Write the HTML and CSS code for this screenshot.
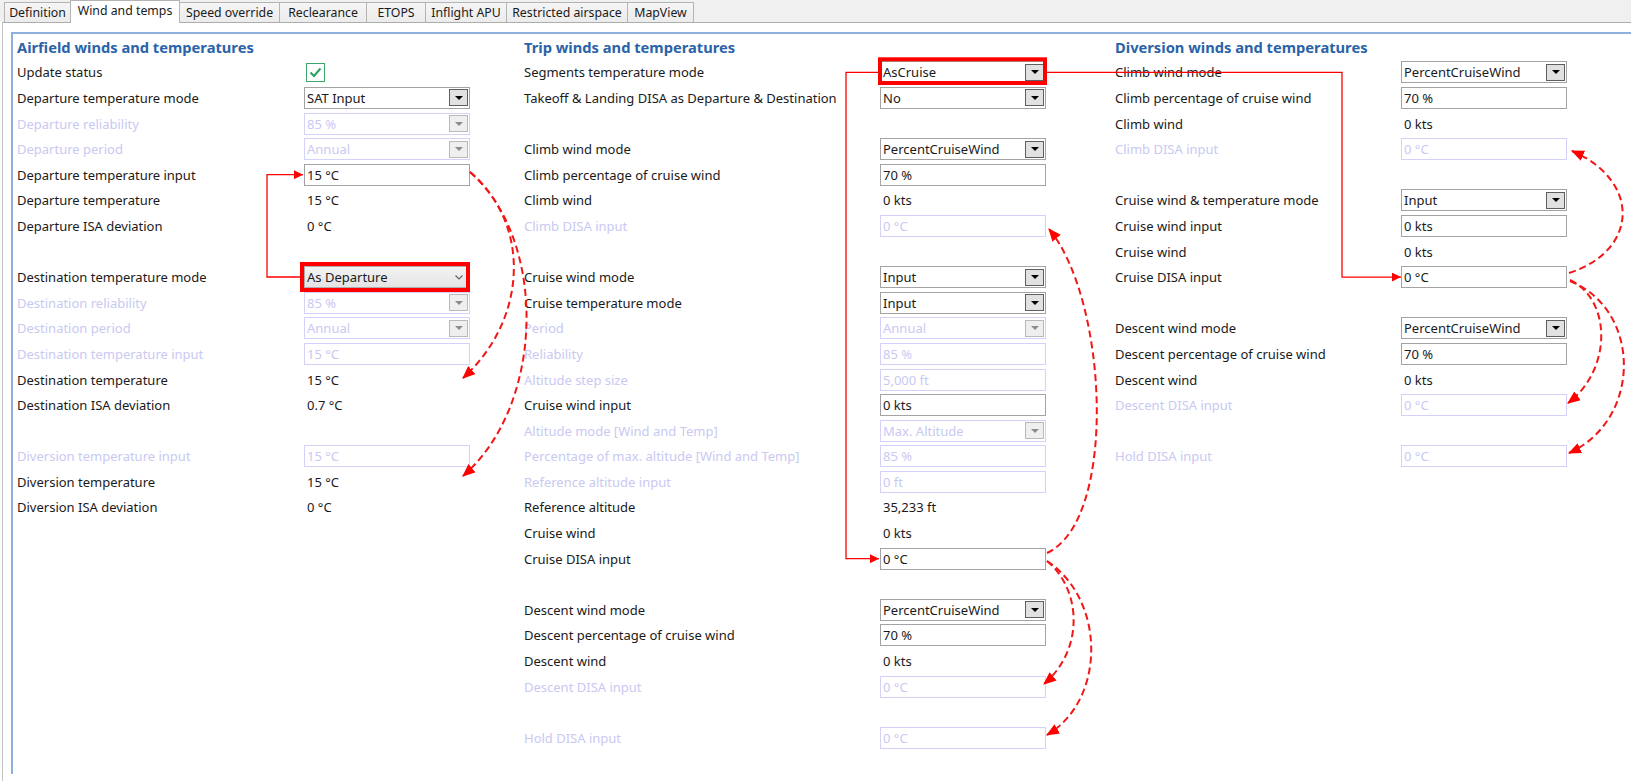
FILE: index.html
```html
<!DOCTYPE html>
<html>
<head>
    <meta charset="utf-8">
    <title> Wind and temps </title>
    <link rel="stylesheet" href="styles.css">
</head>
<body>
    <!-- Tab strip -->
    <div class="tabs">
        <div class="tab w-def">Definition</div>
        <div class="tab on w-wind">Wind and temps</div>
        <div class="tab w-speed">Speed override</div>
        <div class="tab w-recl">Reclearance</div>
        <div class="tab w-etops">ETOPS</div>
        <div class="tab w-apu">Inflight APU</div>
        <div class="tab w-restr">Restricted airspace</div>
        <div class="tab w-map">MapView</div>
    </div>

    <div class="page">
        <div class="panel">

            <!-- Airfield -->
            <section class="col airfield">
                <h2>Airfield winds and temperatures</h2>

                <span class="lbl">Update status</span>
                <span class="cb"><svg width="13" height="11" viewBox="0 0 13 11"><path d="M1.5,5.5 L5,9 L11.5,1.5" fill="none" stroke="#2b9f5f" stroke-width="2"/></svg></span>

                <span class="lbl">Departure temperature mode</span>
                <div class="dd"><span>SAT Input</span><i class="btn"></i></div>

                <span class="lbl off">Departure reliability</span>
                <div class="dd off"><span>85 %</span><i class="btn"></i></div>

                <span class="lbl off">Departure period</span>
                <div class="dd off"><span>Annual</span><i class="btn"></i></div>

                <span class="lbl">Departure temperature input</span>
                <div class="tb">15 °C</div>

                <span class="lbl">Departure temperature</span>
                <span class="val">15 °C</span>

                <span class="lbl">Departure ISA deviation</span>
                <span class="val">0 °C</span>

                <div class="gap"></div>

                <span class="lbl">Destination temperature mode</span>
                <div class="win"><span>As Departure</span><svg class="chev" width="8" height="5" viewBox="0 0 8 5"><path d="M0.5,0.5 L4,4 L7.5,0.5" fill="none" stroke="#606060" stroke-width="1.1"/></svg></div>

                <span class="lbl off">Destination reliability</span>
                <div class="dd off"><span>85 %</span><i class="btn"></i></div>

                <span class="lbl off">Destination period</span>
                <div class="dd off"><span>Annual</span><i class="btn"></i></div>

                <span class="lbl off">Destination temperature input</span>
                <div class="tb off">15 °C</div>

                <span class="lbl">Destination temperature</span>
                <span class="val">15 °C</span>

                <span class="lbl">Destination ISA deviation</span>
                <span class="val">0.7 °C</span>

                <div class="gap"></div>

                <span class="lbl off">Diversion temperature input</span>
                <div class="tb off">15 °C</div>

                <span class="lbl">Diversion temperature</span>
                <span class="val">15 °C</span>

                <span class="lbl">Diversion ISA deviation</span>
                <span class="val">0 °C</span>
            </section>

            <!-- Trip -->
            <section class="col trip">
                <h2>Trip winds and temperatures</h2>

                <span class="lbl">Segments temperature mode</span>
                <div class="dd"><span>AsCruise</span><i class="btn"></i></div>

                <span class="lbl">Takeoff &amp; Landing DISA as Departure &amp; Destination</span>
                <div class="dd"><span>No</span><i class="btn"></i></div>

                <div class="gap"></div>

                <span class="lbl">Climb wind mode</span>
                <div class="dd"><span>PercentCruiseWind</span><i class="btn"></i></div>

                <span class="lbl">Climb percentage of cruise wind</span>
                <div class="tb">70 %</div>

                <span class="lbl">Climb wind</span>
                <span class="val">0 kts</span>

                <span class="lbl off">Climb DISA input</span>
                <div class="tb off">0 °C</div>

                <div class="gap"></div>

                <span class="lbl">Cruise wind mode</span>
                <div class="dd"><span>Input</span><i class="btn"></i></div>

                <span class="lbl">Cruise temperature mode</span>
                <div class="dd"><span>Input</span><i class="btn"></i></div>

                <span class="lbl off">Period</span>
                <div class="dd off"><span>Annual</span><i class="btn"></i></div>

                <span class="lbl off">Reliability</span>
                <div class="tb off">85 %</div>

                <span class="lbl off">Altitude step size</span>
                <div class="tb off">5,000 ft</div>

                <span class="lbl">Cruise wind input</span>
                <div class="tb">0 kts</div>

                <span class="lbl off">Altitude mode [Wind and Temp]</span>
                <div class="dd off"><span>Max. Altitude</span><i class="btn"></i></div>

                <span class="lbl off">Percentage of max. altitude [Wind and Temp]</span>
                <div class="tb off">85 %</div>

                <span class="lbl off">Reference altitude input</span>
                <div class="tb off">0 ft</div>

                <span class="lbl">Reference altitude</span>
                <span class="val">35,233 ft</span>

                <span class="lbl">Cruise wind</span>
                <span class="val">0 kts</span>

                <span class="lbl">Cruise DISA input</span>
                <div class="tb">0 °C</div>

                <div class="gap"></div>

                <span class="lbl">Descent wind mode</span>
                <div class="dd"><span>PercentCruiseWind</span><i class="btn"></i></div>

                <span class="lbl">Descent percentage of cruise wind</span>
                <div class="tb">70 %</div>

                <span class="lbl">Descent wind</span>
                <span class="val">0 kts</span>

                <span class="lbl off">Descent DISA input</span>
                <div class="tb off">0 °C</div>

                <div class="gap"></div>

                <span class="lbl off">Hold DISA input</span>
                <div class="tb off">0 °C</div>
            </section>

            <!-- Diversion -->
            <section class="col diversion">
                <h2>Diversion winds and temperatures</h2>

                <span class="lbl">Climb wind mode</span>
                <div class="dd"><span>PercentCruiseWind</span><i class="btn"></i></div>

                <span class="lbl">Climb percentage of cruise wind</span>
                <div class="tb">70 %</div>

                <span class="lbl">Climb wind</span>
                <span class="val">0 kts</span>

                <span class="lbl off">Climb DISA input</span>
                <div class="tb off">0 °C</div>

                <div class="gap"></div>

                <span class="lbl">Cruise wind &amp; temperature mode</span>
                <div class="dd"><span>Input</span><i class="btn"></i></div>

                <span class="lbl">Cruise wind input</span>
                <div class="tb">0 kts</div>

                <span class="lbl">Cruise wind</span>
                <span class="val">0 kts</span>

                <span class="lbl">Cruise DISA input</span>
                <div class="tb">0 °C</div>

                <div class="gap"></div>

                <span class="lbl">Descent wind mode</span>
                <div class="dd"><span>PercentCruiseWind</span><i class="btn"></i></div>

                <span class="lbl">Descent percentage of cruise wind</span>
                <div class="tb">70 %</div>

                <span class="lbl">Descent wind</span>
                <span class="val">0 kts</span>

                <span class="lbl off">Descent DISA input</span>
                <div class="tb off">0 °C</div>

                <div class="gap"></div>

                <span class="lbl off">Hold DISA input</span>
                <div class="tb off">0 °C</div>
            </section>

        </div>
    </div>

    <!-- Annotations drawn over the form -->
    <svg class="marks" width="1631" height="781" viewBox="0 0 1631 781">
        <defs>
            <marker id="tip" viewBox="0 0 10 10" refX="10" refY="5" markerWidth="10" markerHeight="9" markerUnits="userSpaceOnUse" orient="auto">
                <path d="M0,0 L10,5 L0,10 Z" fill="#ff0000"/>
            </marker>
            <marker id="tip2" viewBox="0 0 12 10" refX="11" refY="5" markerWidth="13" markerHeight="11" markerUnits="userSpaceOnUse" orient="auto">
                <path d="M0,0 L12,5 L0,10 Z" fill="#ff0000"/>
            </marker>
        </defs>

        <!-- highlighted selectors -->
        <rect x="302" y="264" width="166" height="26" fill="none" stroke="#ff0000" stroke-width="4"/>
        <rect x="880" y="59.3" width="165" height="23.7" fill="none" stroke="#ff0000" stroke-width="4"/>

        <!-- solid links -->
        <g fill="none" stroke="#ff0000" stroke-width="1.3">
            <polyline points="300,277 267,277 267,174.7 303,174.7" marker-end="url(#tip)"/>
            <polyline points="878,72.3 846,72.3 846,558.7 879,558.7" marker-end="url(#tip)"/>
            <polyline points="1047,72.3 1342,72.3 1342,277.1 1401,277.1" marker-end="url(#tip)"/>
        </g>

        <!-- dashed links -->
        <g fill="none" stroke="#f21616" stroke-width="2" stroke-dasharray="7 4">
            <path d="M470,172 C532,225 527,320 463,378" marker-end="url(#tip2)"/>
            <path d="M470,172 C548,240 545,405 463,476" marker-end="url(#tip2)"/>

            <path d="M1047,553 C1118,520 1108,300 1049,229" marker-end="url(#tip2)"/>
            <path d="M1047,561 C1082,590 1084,650 1044,684" marker-end="url(#tip2)"/>
            <path d="M1047,561 C1106,600 1106,700 1047,735" marker-end="url(#tip2)"/>

            <path d="M1569,273 C1640,250 1640,180 1572,151" marker-end="url(#tip2)"/>
            <path d="M1570,280 C1612,300 1612,370 1568,403" marker-end="url(#tip2)"/>
            <path d="M1570,281 C1642,310 1642,420 1569,453" marker-end="url(#tip2)"/>
        </g>
    </svg>
</body>
</html>
```

FILE: styles.css
```css
:root {
    --ink:       #1a1a1a;
    --heading:   #2a63a8;
    --off-text:  #c9c9f2;
    --off-line:  #d3d3fa;
    --box-line:  #a3a3a3;
    --tab-line:  #b4b4b4;
    --panel:     #8db0dd;
    --strip:     #f0f0f0;
}

body {
    margin: 0;
    width: 1631px;
    height: 781px;
    overflow: hidden;
    position: relative;

    font-family: "Noto Sans", "Open Sans", sans-serif;
    font-size: 13px;
    color: var( --ink );
    background: #fff;
}

/* tab strip */
.tabs {
    display: flex;
    align-items: flex-end;
    height: 22px;
    padding-left: 4px;
    background: var( --strip );
}

.tab {
    box-sizing: border-box;
    height: 20px;
    border: 1px solid var( --tab-line );
    border-bottom: none;
    border-right: none;
    background: linear-gradient( #f5f5f5, #ececec );

    font-size: 12.3px;
    line-height: 19px;
    text-align: center;
    white-space: nowrap;
}

.tab:last-child {
    border-right: 1px solid var( --tab-line );
}

.tab.on {
    position: relative;
    z-index: 1;
    height: 23px;
    margin-bottom: -1px;
    line-height: 20px;
    background: #fff;
    border-right: 1px solid var( --tab-line );
}

.tab.on + .tab {
    border-left: none;
}

.w-def   { width: 66px; }
.w-wind  { width: 110px; }
.w-speed { width: 99px; }
.w-recl  { width: 87px; }
.w-etops { width: 59px; }
.w-apu   { width: 81px; }
.w-restr { width: 121px; }
.w-map   { width: 67px; }

/* tab page */
.page {
    margin-left: 2px;
    height: 758px;
    border-left: 1px solid #c4c4c4;
    border-top: 1px solid #adadad;
}

.panel {
    display: grid;
    grid-template-columns: 507px 591px 1fr;
    align-items: start;

    height: 740px;
    margin: 9px 0 0 8px;
    padding-left: 4px;

    border-left: 2px solid var( --panel );
    border-top: 2px solid var( --panel );
}

.col {
    display: grid;
    grid-template-columns: var( --lw ) 166px;
    grid-auto-rows: 25.6px;
    align-items: center;
}

.airfield  { --lw: 287px; }
.trip      { --lw: 356px; }
.diversion { --lw: 286px; }

h2 {
    grid-column: 1 / -1;
    margin: 0;

    font-size: 14.7px;
    font-weight: 700;
    color: var( --heading );
}

.gap {
    grid-column: 1 / -1;
}

.lbl {
    white-space: nowrap;
}

.off {
    color: var( --off-text );
}

.val {
    padding-left: 3px;
}

/* inputs */
.dd, .tb, .win {
    box-sizing: border-box;
    display: flex;
    align-items: center;
    height: 22px;
    padding-left: 2px;

    border: 1px solid var( --box-line );
    background: #fff;
    white-space: nowrap;
}

.dd.off, .tb.off {
    border-color: var( --off-line );
    color: var( --off-text );
}

.btn {
    box-sizing: border-box;
    display: flex;
    align-items: center;
    justify-content: center;

    width: 19px;
    height: 17px;
    margin-left: auto;
    margin-right: 1px;

    border: 1px solid #5f5f5f;
    background: #e1e1e1;
}

.btn::after {
    content: "";
    border-left: 4px solid transparent;
    border-right: 4px solid transparent;
    border-top: 4px solid #000;
}

.dd.off .btn {
    border-color: #b9b9b9;
    background: #efefef;
}

.dd.off .btn::after {
    border-top-color: #8c8c8c;
}

.win {
    border-color: #adadad;
    background: linear-gradient( #f3f3f3, #e4e4e4 );
}

.chev {
    margin-left: auto;
    margin-right: 6px;
}

.cb {
    box-sizing: border-box;
    display: flex;
    align-items: center;
    justify-content: center;

    width: 19px;
    height: 19px;
    margin-left: 2px;

    border: 1px solid #3aa86b;
    background: #fff;
}

/* annotation layer */
.marks {
    position: absolute;
    left: 0;
    top: 0;
    pointer-events: none;
}
```
